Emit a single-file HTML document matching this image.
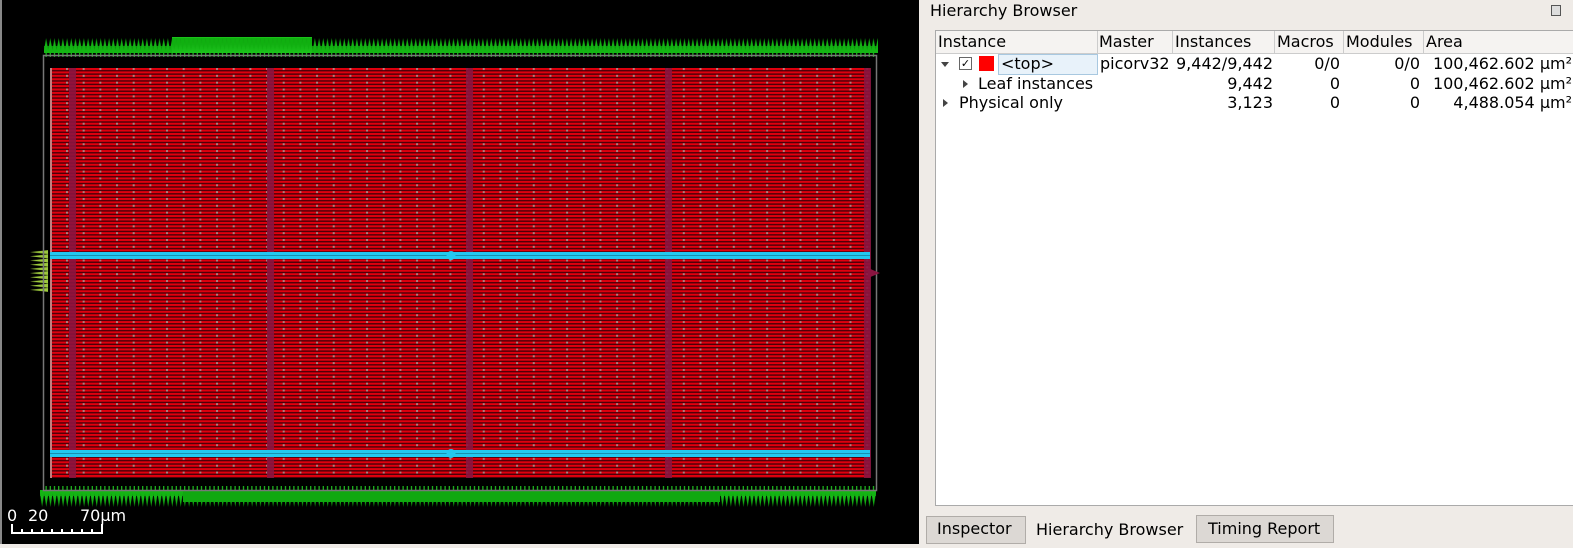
<!DOCTYPE html>
<html><head><meta charset="utf-8"><style>
html,body{margin:0;padding:0;width:1573px;height:544px;overflow:hidden;background:#efebe7;font-family:"DejaVu Sans","Liberation Sans",sans-serif;}
#canvas{position:absolute;left:0;top:0;width:919px;height:544px;background:#000;}
#panel{position:absolute;left:919px;top:0;width:654px;height:544px;background:#efebe7;}
.t{position:absolute;font-size:16px;color:#000;white-space:nowrap;}
.r{text-align:right;}
</style></head><body>
<div id="canvas">
<svg width="919" height="544" xmlns="http://www.w3.org/2000/svg">
<defs>
<pattern id="rows" x="0" y="68" width="20" height="3.42" patternUnits="userSpaceOnUse">
<rect width="20" height="3.42" fill="#4a0008"/><rect y="0" width="20" height="2" fill="#e0000e"/></pattern>
<pattern id="dash" x="66" y="68" width="16.67" height="6.84" patternUnits="userSpaceOnUse">
<rect x="0" y="0" width="2" height="2" fill="#b08080"/></pattern>
<linearGradient id="gt" x1="0" y1="0" x2="0" y2="1"><stop offset="0" stop-color="#0a9a0a"/><stop offset="1" stop-color="#22d022"/></linearGradient>
<linearGradient id="gb" x1="0" y1="0" x2="0" y2="1"><stop offset="0" stop-color="#22d022"/><stop offset="1" stop-color="#0a9a0a"/></linearGradient>
<pattern id="tt" x="44" y="38" width="4.2" height="15" patternUnits="userSpaceOnUse">
<polygon points="-0.5,15 2.1,0 4.7,15" fill="url(#gt)"/></pattern>
<pattern id="bt" x="40" y="490" width="4.2" height="17" patternUnits="userSpaceOnUse">
<polygon points="-0.5,0 2.1,17 4.7,0" fill="url(#gb)"/></pattern>
<pattern id="tick" x="44" y="0" width="4.2" height="10" patternUnits="userSpaceOnUse">
<rect x="1.5" width="1.2" height="10" fill="#20c020"/></pattern>
<pattern id="lt" x="0" y="250" width="30" height="4.2" patternUnits="userSpaceOnUse">
<polygon points="0,2.1 22,-0.3 22,4.5" fill="#9cc83c"/></pattern>
</defs>
<rect x="0" y="0" width="2" height="544" fill="#888"/>
<rect x="44" y="38" width="834" height="15" fill="url(#tt)"/>
<rect x="44" y="46" width="834" height="7" fill="#12b012" opacity="0.8"/>
<rect x="172" y="37" width="140" height="16" fill="#10b010"/>
<rect x="172" y="37" width="140" height="16" fill="url(#tt)" opacity="0.6"/>
<rect x="44" y="53" width="832" height="4" fill="url(#tick)"/>
<rect x="40" y="490" width="836" height="17" fill="url(#bt)"/>
<rect x="40" y="490" width="836" height="6" fill="#12b012" opacity="0.8"/>
<rect x="183" y="490" width="537" height="12" fill="#10a810"/>
<rect x="44" y="486" width="832" height="4" fill="url(#tick)"/>
<rect x="26" y="250" width="22" height="42" fill="url(#lt)"/>
<rect x="43.5" y="55.5" width="833" height="435" fill="none" stroke="#777" stroke-width="1.5"/>
<rect x="50" y="68" width="820" height="410" fill="url(#rows)"/>
<rect x="50" y="68" width="820" height="410" fill="url(#dash)"/>
<g fill="#8a1440" opacity="0.9">
<rect x="69" y="68" width="7" height="410"/><rect x="267" y="68" width="7" height="410"/>
<rect x="466" y="68" width="7" height="410"/><rect x="665" y="68" width="7" height="410"/>
<rect x="864" y="68" width="7" height="410"/>
</g>
<rect x="50" y="68" width="2" height="410" fill="#c08080"/>
<rect x="50" y="252" width="820" height="7" fill="#22c8f0"/><rect x="50" y="255" width="820" height="1" fill="#1890b0"/>
<rect x="50" y="450" width="820" height="7" fill="#22c8f0"/><rect x="50" y="453" width="820" height="1" fill="#1890b0"/>
<circle cx="451" cy="255.5" r="4.5" fill="#22c8f0"/><circle cx="451" cy="453.5" r="4.5" fill="#22c8f0"/>
<polygon points="868,268 880,273 868,278" fill="#8a1440"/>
<text x="7" y="521" fill="#fff" font-size="16" font-family="DejaVu Sans, sans-serif">0</text>
<text x="28" y="521" fill="#fff" font-size="16" font-family="DejaVu Sans, sans-serif">20</text>
<text x="80" y="521" fill="#fff" font-size="16" font-family="DejaVu Sans, sans-serif">70µm</text>
<path d="M12,524V533H102V524M22,529V533M32,529V533M42,529V533M52,529V533M62,529V533M72,529V533M82,529V533M92,529V533" stroke="#fff" stroke-width="2" fill="none"/>
</svg>
</div>
<div id="panel">
<div class="t" style="left:11px;top:1px;font-size:16px;">Hierarchy Browser</div>
<div style="position:absolute;left:632px;top:5px;width:8px;height:9px;border:1px solid #555;background:#ddd"></div>
<div style="position:absolute;left:16px;top:30px;width:640px;height:474px;background:#fff;border:1px solid #aaa;"></div>
<div style="position:absolute;left:17px;top:31px;width:640px;height:22px;background:#f5f3f1;border-bottom:1px solid #ccc;"></div>
<div style="position:absolute;left:178px;top:31px;width:1px;height:22px;background:#ccc"></div>
<div style="position:absolute;left:253px;top:31px;width:1px;height:22px;background:#ccc"></div>
<div style="position:absolute;left:355px;top:31px;width:1px;height:22px;background:#ccc"></div>
<div style="position:absolute;left:424px;top:31px;width:1px;height:22px;background:#ccc"></div>
<div style="position:absolute;left:504px;top:31px;width:1px;height:22px;background:#ccc"></div>
<div class="t" style="left:19px;top:32px">Instance</div>
<div class="t" style="left:180px;top:32px">Master</div>
<div class="t" style="left:256px;top:32px">Instances</div>
<div class="t" style="left:358px;top:32px">Macros</div>
<div class="t" style="left:427px;top:32px">Modules</div>
<div class="t" style="left:507px;top:32px">Area</div>
<div style="position:absolute;left:22px;top:62px;width:0;height:0;border-left:4px solid transparent;border-right:4px solid transparent;border-top:5px solid #444"></div>
<div style="position:absolute;left:40px;top:57px;width:11px;height:11px;border:1px solid #666;background:#fff;font-size:11px;line-height:11px;text-align:center">✓</div>
<div style="position:absolute;left:60px;top:56px;width:15px;height:15px;background:#f00"></div>
<div style="position:absolute;left:79px;top:54px;width:98px;height:19px;background:#e8f2fa;border:1px solid #a8c8e0"></div>
<div class="t" style="left:82px;top:54px">&lt;top&gt;</div>
<div class="t" style="left:181px;top:54px">picorv32</div>
<div class="t r" style="left:230px;top:54px;width:124px">9,442/9,442</div>
<div class="t r" style="left:360px;top:54px;width:61px">0/0</div>
<div class="t r" style="left:430px;top:54px;width:71px">0/0</div>
<div class="t r" style="left:490px;top:54px;width:163px">100,462.602 µm²</div>
<div style="position:absolute;left:44px;top:80px;border-top:4px solid transparent;border-bottom:4px solid transparent;border-left:5px solid #444"></div>
<div class="t" style="left:59px;top:74px">Leaf instances</div>
<div class="t r" style="left:250px;top:74px;width:104px">9,442</div>
<div class="t r" style="left:360px;top:74px;width:61px">0</div>
<div class="t r" style="left:430px;top:74px;width:71px">0</div>
<div class="t r" style="left:490px;top:74px;width:163px">100,462.602 µm²</div>
<div style="position:absolute;left:24px;top:99px;border-top:4px solid transparent;border-bottom:4px solid transparent;border-left:5px solid #444"></div>
<div class="t" style="left:40px;top:93px">Physical only</div>
<div class="t r" style="left:250px;top:93px;width:104px">3,123</div>
<div class="t r" style="left:360px;top:93px;width:61px">0</div>
<div class="t r" style="left:430px;top:93px;width:71px">0</div>
<div class="t r" style="left:490px;top:93px;width:163px">4,488.054 µm²</div>
<div style="position:absolute;left:7px;top:516px;width:98px;height:26px;background:#dcd8d4;border:1px solid #b0aca8"></div>
<div class="t" style="left:18px;top:519px">Inspector</div>
<div class="t" style="left:117px;top:520px">Hierarchy Browser</div>
<div style="position:absolute;left:277px;top:515px;width:136px;height:26px;background:#dcd8d4;border:1px solid #b0aca8"></div>
<div class="t" style="left:289px;top:519px">Timing Report</div>
</div>
</body></html>
